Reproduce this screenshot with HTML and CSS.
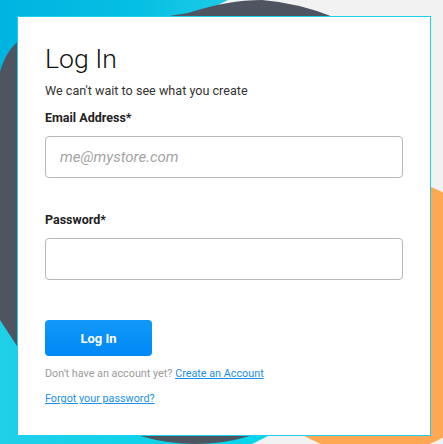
FILE: index.html
```html
<!DOCTYPE html>
<html lang="en">
<head>
    <meta charset="UTF-8">
    <meta name="viewport" content="width=device-width, initial-scale=1.0">
    <title>Log In</title>
    <link rel="stylesheet" href="styles.css">
</head>
<body>
    <svg class="backdrop" viewBox="0 0 443 444" preserveAspectRatio="none" aria-hidden="true">
        <defs>
            <linearGradient id="cyanTop" x1="0" y1="0" x2="1" y2="0">
                <stop offset="0" stop-color="#00b4e1"/>
                <stop offset="0.6" stop-color="#06bfe3"/>
                <stop offset="1" stop-color="#1ccbe8"/>
            </linearGradient>
            <linearGradient id="cyanBottom" x1="0" y1="0" x2="1" y2="0">
                <stop offset="0" stop-color="#20cfe8"/>
                <stop offset="1" stop-color="#00d6ec"/>
            </linearGradient>
        </defs>
        <path d="M0 0 H228 Q190 20 120 40 L0 110 Z" fill="url(#cyanTop)"/>
        <path d="M0 290 L120 330 L275 420 L268 436 L252 444 L0 444 Z" fill="url(#cyanBottom)"/>
        <circle cx="375" cy="315" r="140" fill="#ffa853"/>
        <path d="M0 72 Q6 50 20 40 L188 13 Q228 0 262 0 Q300 3 336 18 L336 436 L250 436 Q196 452 140 436 L17 346 L0 320 Z" fill="#4e5560"/>
    </svg>

    <main class="card">
        <h1 class="title">Log In</h1>
        <p class="subtitle">We can't wait to see what you create</p>
        <form class="form">
            <div class="field">
                <label for="email">Email Address*</label>
                <input type="email" id="email" placeholder="me@mystore.com">
            </div>
            <div class="field">
                <label for="password">Password*</label>
                <input type="password" id="password">
            </div>
            <button type="submit" class="btn">Log In</button>
        </form>
        <p class="note">Don't have an account yet? <a href="#">Create an Account</a></p>
        <p class="note forgot"><a href="#">Forgot your password?</a></p>
    </main>
</body>
</html>
```

FILE: styles.css
```css
body {
    font-family: Roboto, 'Noto Sans', sans-serif;
    margin: 0;
    padding: 16px 0 0 17px;
    min-height: 100vh;
    box-sizing: border-box;
    background-color: #f2f2f2;
    position: relative;
    overflow: hidden;
    color: #222;
}

.backdrop {
    position: absolute;
    top: 0;
    left: 0;
    width: 443px;
    height: 444px;
}

.card {
    position: relative;
    width: 358px;
    padding: 25px 27px 29px;
    background: #fff;
    border: 1px solid #1bcff0;
}

.title {
    margin: 0;
    font-size: 26.6px;
    font-weight: 300;
    line-height: 34px;
    color: #111;
}

.subtitle {
    margin: 6px 0 0;
    font-size: 12.6px;
    line-height: 18px;
    color: #333;
}

.field {
    margin-top: 9px;
}
.field + .field {
    margin-top: 33px;
}
.field label {
    display: block;
    font-size: 12.5px;
    line-height: 18px;
    font-weight: 700;
    color: #222;
    margin-bottom: 9px;
}
.field input {
    display: block;
    width: 100%;
    height: 42px;
    box-sizing: border-box;
    padding: 0 14px;
    border: 1px solid #b7b7b9;
    border-radius: 4px;
    font-family: Roboto, sans-serif;
    font-size: 15px;
    color: #222;
    outline: none;
}
.field input::placeholder {
    color: #a3a3a3;
    font-style: italic;
}

.btn {
    display: block;
    margin-top: 40px;
    width: 107px;
    height: 36px;
    border: none;
    border-radius: 4px;
    background: linear-gradient(#1198f8, #0088f6);
    color: #fff;
    font-family: Roboto, sans-serif;
    font-size: 13px;
    font-weight: 700;
    cursor: pointer;
}

.note {
    margin: 11px 0 0;
    font-size: 10.8px;
    line-height: 14px;
    color: #9a9a9a;
}
.note a {
    color: #1a8fe8;
}
.forgot {
    margin-top: 11px;
}
```
